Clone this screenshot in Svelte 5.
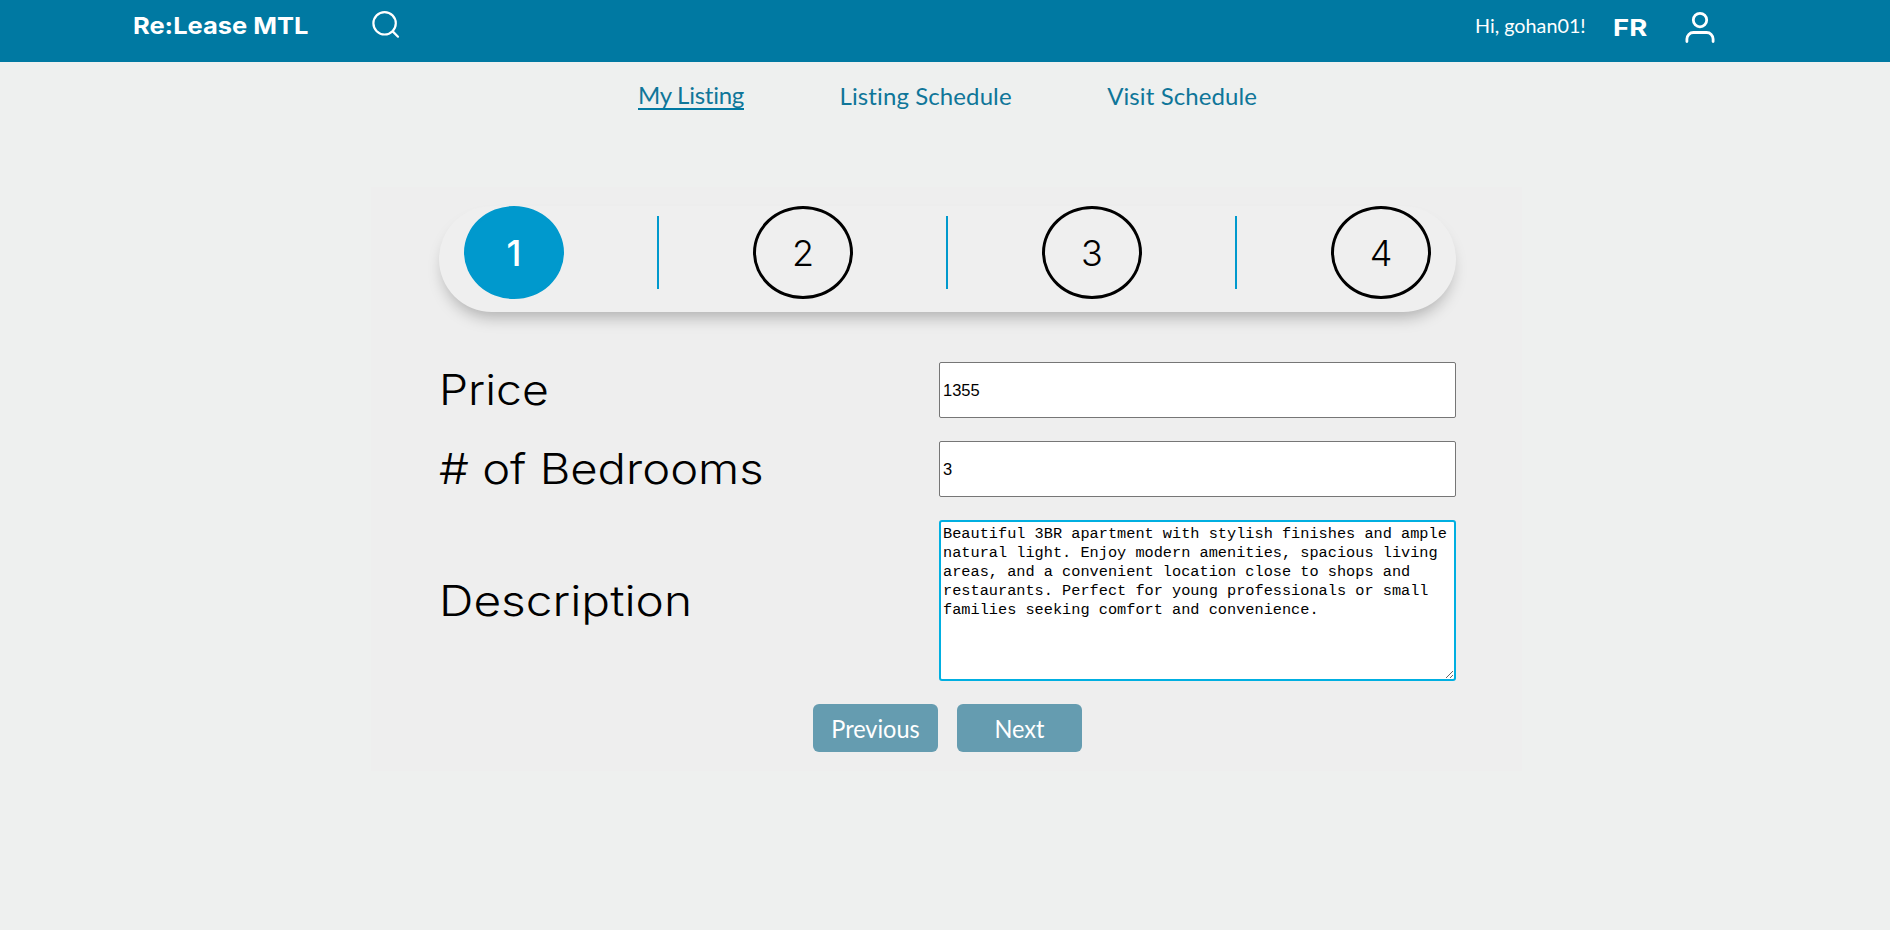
<script>
  let price = $state('1355');
  let bedrooms = $state('3');
  let description = $state(
    'Beautiful 3BR apartment with stylish finishes and ample natural light. Enjoy modern amenities, spacious living areas, and a convenient location close to shops and restaurants. Perfect for young professionals or small families seeking comfort and convenience.'
  );
  let step = $state(1);
  const steps = [1, 2, 3, 4];
</script>

<header>
  <span class="logo">Re:Lease MTL</span>
  <svg class="search" viewBox="0 0 28 28" fill="none" stroke="#fff" stroke-width="2.2" stroke-linecap="round">
    <circle cx="12.6" cy="12.3" r="11.2" />
    <path d="M20.7 20.4l5.3 5.3" />
  </svg>
  <div class="user">
    <span class="hello">Hi, gohan01!</span>
    <span class="lang">FR</span>
    <svg class="person" viewBox="0 0 30 32" fill="none" stroke="#fff" stroke-width="2.8" stroke-linecap="round">
      <circle cx="15" cy="8.1" r="6.7" />
      <path d="M1.9 29.6v-2.6a6.5 6.5 0 0 1 6.5-6.5h13.2a6.5 6.5 0 0 1 6.5 6.5v2.6" />
    </svg>
  </div>
</header>

<nav>
  <a class="active" href="#listing">My Listing</a>
  <a href="#schedule">Listing Schedule</a>
  <a href="#visits">Visit Schedule</a>
</nav>

<main>
  <div class="steps">
    {#each steps as n}
      {#if n > 1}<i></i>{/if}
      <button class="step" class:current={n === step} onclick={() => (step = n)}><span>{n}</span></button>
    {/each}
  </div>

  <form onsubmit={(e) => e.preventDefault()}>
    <label for="price"><span class="price">Price</span></label>
    <input id="price" type="text" bind:value={price} />
    <label for="bedrooms"><span class="beds"># of Bedrooms</span></label>
    <input id="bedrooms" type="text" bind:value={bedrooms} />
    <label for="description"><span class="desc">Description</span></label>
    <textarea id="description" spellcheck="false" bind:value={description}></textarea>
  </form>

  <div class="actions">
    <button><span>Previous</span></button>
    <button><span>Next</span></button>
  </div>
</main>

<style>
  :global(body) {
    background: #eef0ef;
  }
  header {
    height: 62px;
    box-sizing: border-box;
    background: #0079a2;
    color: #fff;
    display: flex;
    align-items: flex-start;
    padding: 0 175px 0 132.5px;
  }
  .logo,
  .lang {
    font: 700 23.5px/28px Inter, sans-serif;
    transform-origin: left;
  }
  .logo {
    width: 175px;
    margin-top: 12px;
    font-weight: 650;
    white-space: nowrap;
    transform: scaleX(1.085);
  }
  .search {
    width: 28px;
    height: 28px;
    margin: 10.5px 0 0 64px;
  }
  .user {
    margin-left: auto;
    display: flex;
  }
  .hello {
    font: 400 19px/24px Lato, sans-serif;
    width: 110px;
    margin: 14px 28px 0 0;
    transform-origin: left;
    transform: scaleX(1.04);
    white-space: nowrap;
  }
  .lang {
    width: 34px;
    margin: 13.5px 38px 0 0;
    transform: scaleX(1.17);
  }
  .person {
    width: 30px;
    height: 32px;
    margin-top: 11.5px;
  }
  nav {
    display: flex;
    justify-content: center;
    gap: 95.5px;
    height: 125px;
    box-sizing: border-box;
    padding: 19px 0 0 5px;
  }
  nav a {
    font: 400 24px/30px Lato, sans-serif;
    font-variant-ligatures: none;
    letter-spacing: 0.1px;
    color: #0f7699;
    text-decoration: none;
    height: 30px;
  }
  nav a.active {
    height: 27px;
    line-height: 28px;
    letter-spacing: -0.25px;
    border-bottom: 2px solid #0079a2;
  }
  main {
    width: 1151px;
    height: 584px;
    box-sizing: border-box;
    margin: 0 auto 0 371px;
    padding: 19px 66px 0 68px;
    background: #eee;
  }
  .steps {
    height: 106px;
    box-sizing: border-box;
    padding: 0 25px 13px;
    display: flex;
    justify-content: space-between;
    align-items: center;
    border-radius: 53px;
    background: #efefef;
    box-shadow: 0 10px 16px -5px rgba(0, 0, 0, 0.27);
  }
  .steps i {
    width: 2px;
    height: 73px;
    margin: 0 1px 0 0;
    background: #0099cd;
  }
  .step {
    width: 100px;
    height: 93px;
    padding: 0;
    border: 3px solid #000;
    border-radius: 50%;
    background: none;
    color: #000;
    font: 300 36px/44px Inter, sans-serif;
  }
  .step span {
    display: block;
  }
  .step.current {
    border-color: #0099cd;
    background: #0099cd;
    color: #fff;
    font-weight: 500;
  }
  form {
    margin-top: 50px;
    display: grid;
    grid-template-columns: 500px 517px;
    grid-template-rows: 56px 56px 161px;
    row-gap: 23px;
    align-items: center;
  }
  label {
    font: 300 42.5px/56px Inter, sans-serif;
    color: #000;
    white-space: nowrap;
  }
  label span {
    display: inline-block;
    transform-origin: left;
  }
  .price {
    transform: scaleX(1.09);
  }
  .beds {
    transform: scaleX(1.11);
  }
  .desc {
    transform: scaleX(1.125);
  }
  input,
  textarea {
    box-sizing: border-box;
    width: 100%;
    height: 100%;
    margin: 0;
    background: #fff;
    color: #000;
    outline: 0;
  }
  input {
    padding: 1px 3px;
    border: 1px solid #767676;
    border-radius: 2px;
    font: 16.5px "Liberation Sans", Arial, sans-serif;
  }
  textarea {
    display: block;
    padding: 3px 2px 2px 2px;
    border: 2px solid #00afe1;
    border-radius: 3px;
    font: 15.28px/19px "Liberation Mono", monospace;
    resize: both;
  }
  .actions {
    display: flex;
    gap: 19px;
    margin: 23px 0 0 374px;
  }
  .actions button {
    width: 125px;
    height: 48px;
    padding: 0;
    border: 0;
    border-radius: 6px;
    background: #659cb0;
    color: #fff;
    font: 400 25px/48px Lato, sans-serif;
  }
  .actions span {
    display: block;
    transform: scaleX(0.94);
  }
</style>
